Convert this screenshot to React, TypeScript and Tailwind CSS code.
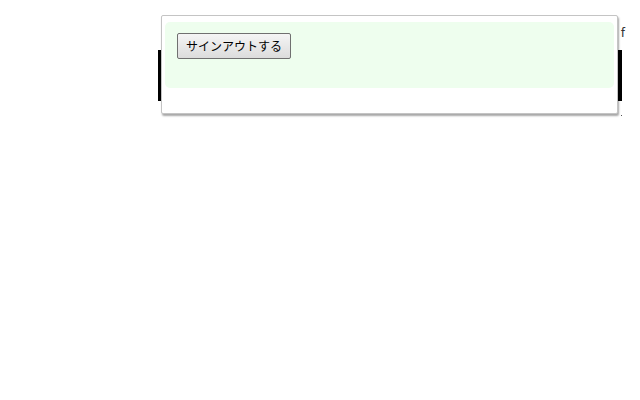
export default function App() {
  return (
    <div className="relative h-[400px] w-[640px] overflow-hidden bg-white font-['Noto_Sans_CJK_JP',sans-serif]">
      {/* page underneath the popup */}
      <div className="flex justify-end pr-[15px] pt-[24px] text-[13px] leading-[16px] text-[#333]">
        <span>f</span>
      </div>
      <div className="ml-[158px] mt-[10px] h-[51px] w-[464px] bg-black" />
      <div className="ml-[621px] mt-[14px] h-px w-px bg-[#555]" />

      {/* popup */}
      <div className="absolute left-[161px] top-[15px] h-[99px] w-[457px] rounded-[2px] border border-[#c4c4c4] bg-white px-[3px] pt-[6px] shadow-[1px_2px_2px_rgba(0,0,0,0.35)]">
        <div className="flex h-[66px] items-start rounded-[5px] bg-[#eefeee] pl-[12px] pt-[11px]">
          <button className="block h-[26px] w-[114px] rounded-[2px] border border-[#707070] bg-gradient-to-b from-[#f5f5f5] to-[#dcdcdc] text-center text-[12px] leading-[16px] text-black font-['Noto_Sans_CJK_JP',sans-serif]">
            サインアウトする
          </button>
        </div>
      </div>
    </div>
  )
}
